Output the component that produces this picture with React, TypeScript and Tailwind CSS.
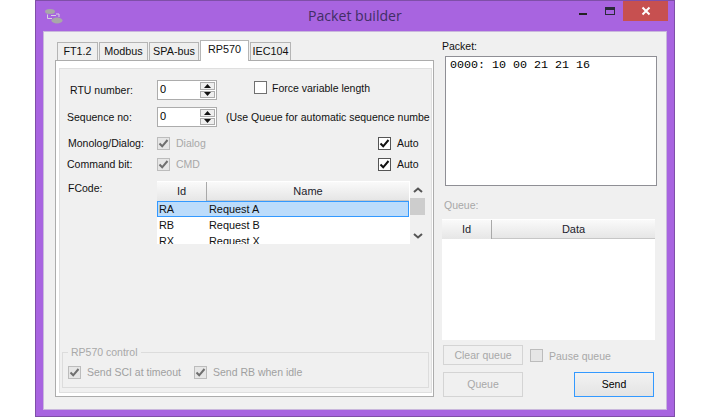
import React from "react";

const sans = "font-['Liberation_Sans',Arial,sans-serif]";

function Box({ on, dim }: { on?: boolean; dim?: boolean }) {
  return (
    <span
      className={
        "flex h-[13px] w-[13px] shrink-0 items-center justify-center border " +
        (dim ? "border-[#bcbcbc] bg-[#e6e6e6]" : on ? "border-[#555555] bg-white" : "border-[#707070] bg-white")
      }
    >
      {on && (
        <svg width="11" height="11" viewBox="0 0 11 11">
          <path
            d="M1.5 5.5 L4.2 8.3 L9.5 2"
            fill="none"
            stroke={dim ? "#6f6f6f" : "#111111"}
            strokeWidth="2"
          />
        </svg>
      )}
    </span>
  );
}

function Spinner() {
  return (
    <div className="flex h-[20px] w-[60px] shrink-0 border border-[#acacac] bg-white pl-[2px]">
      <span className="flex-1 text-[11px] leading-[16px] text-black">0</span>
      <div className="flex w-[16px] flex-col gap-px bg-white py-px pr-px">
        <div className="flex flex-1 items-center justify-center border border-[#adadad] bg-[#efefef]">
          <svg width="7" height="4" viewBox="0 0 7 4"><path d="M3.5 0 L7 4 L0 4Z" fill="#111" /></svg>
        </div>
        <div className="flex flex-1 items-center justify-center border border-[#adadad] bg-[#efefef]">
          <svg width="7" height="4" viewBox="0 0 7 4"><path d="M0 0 L7 0 L3.5 4Z" fill="#111" /></svg>
        </div>
      </div>
    </div>
  );
}

function Head({ id, name, nameW, idW }: { id: string; name: string; idW: string; nameW: string }) {
  return (
    <div className="flex h-[20px] shrink-0 border-t border-white text-[11px] leading-[18px] text-[#1c1c2c]">
      <div className={idW + " border-r border-[#a9a9a9] bg-gradient-to-b from-[#fafafa] to-[#e6e6e6] text-center"}>{id}</div>
      <div className={nameW + " border-b border-[#c6c6c6] bg-gradient-to-b from-[#fafafa] to-[#e6e6e6] text-center"}>{name}</div>
    </div>
  );
}

function Tab({ label, w }: { label: string; w: string }) {
  return (
    <div className={w + " h-[18px] shrink-0 border border-b-0 border-[#b5b5b5] bg-[#efefef] text-center text-[10.8px] leading-[17px] text-[#111]"}>
      {label}
    </div>
  );
}

export default function App() {
  return (
    <div className={sans + " h-[418px] w-[710px] overflow-hidden bg-white pl-[35px]"}>
      <div className="flex h-[417px] w-[640px] flex-col border border-[#7f4fa8] bg-[#a864e0]">
        {/* title bar */}
        <div className="flex h-[30px] shrink-0">
          <svg className="ml-[9px] mt-[7px] shrink-0" width="18" height="17" viewBox="0 0 18 17">
            <ellipse cx="5" cy="3.5" rx="5" ry="2.5" fill="#a8a8a8" />
            <ellipse cx="12" cy="12.5" rx="5.5" ry="3" fill="#a8a8a8" />
            <path d="M2.5 6.5 V10.5 H7 M11 6 H14 V9 M6 7.5 H11" fill="none" stroke="#d8d0e0" strokeWidth="1" />
          </svg>
          <div className="flex-1 pl-[245px] pt-[5px] font-['Open_Sans',sans-serif] text-[14.1px] leading-[20px] text-[#412e66]">
            Packet builder
          </div>
          <div className="mr-[16px] mt-[2px] flex h-[12px] w-[10px] items-end">
            <div className="h-[2px] w-[8px] bg-[#222]" />
          </div>
          <div className="mr-[8px] mt-[6px] h-[8px] w-[10px] border border-t-[3px] border-[#2a2a3a]" />
          <div className="mr-[6px] flex h-[20px] w-[45px] items-center justify-center bg-[#c75050]">
            <svg width="10" height="10" viewBox="0 0 10 10"><path d="M1.5 1.5 L8.5 8.5 M8.5 1.5 L1.5 8.5" stroke="#fff" strokeWidth="2" /></svg>
          </div>
        </div>

        {/* client */}
        <div className="mx-[7px] flex h-[379px] shrink-0 border border-[#c9b7dc] bg-[#f0f0f0] pl-[11px]">
          {/* left */}
          <div className="flex w-[379px] shrink-0 flex-col pt-[8px]">
            <div className="flex h-[20px] items-end gap-px pl-[2px]">
              <Tab label="FT1.2" w="w-[41px]" />
              <Tab label="Modbus" w="w-[49px]" />
              <Tab label="SPA-bus" w="w-[50px]" />
              <div className="relative top-px z-10 h-[21px] w-[49px] shrink-0 border border-b-0 border-[#b5b5b5] bg-white text-center text-[10.8px] leading-[17px] text-[#111]">RP570</div>
              <Tab label="IEC104" w="w-[41px]" />
            </div>
            <div className="h-[337px] border border-[#acacac] bg-white pb-[2px] pl-[3px] pr-px pt-[7px]">
              <div className="flex h-[325px] flex-col overflow-hidden border border-[#dfdfdf] bg-[#f0f0f0] text-[10.5px] leading-[14px] text-[#111]">
                <div className="mt-[11px] flex h-[20px] shrink-0 items-center">
                  <span className="w-[97px] shrink-0 pl-[10px]">RTU number:</span>
                  <Spinner />
                  <span className="ml-[37px] self-start pt-px"><Box /></span>
                  <span className="ml-[5px] self-start pt-px">Force variable length</span>
                </div>
                <div className="mt-[7px] flex h-[20px] shrink-0 items-center">
                  <span className="w-[97px] shrink-0 whitespace-nowrap pl-[7px]">Sequence no:</span>
                  <Spinner />
                  <span className="ml-[9px] shrink-0 whitespace-nowrap">(Use Queue for automatic sequence numbe</span>
                </div>
                <div className="mt-[10px] flex h-[13px] shrink-0 items-start leading-[12px]">
                  <span className="w-[97px] shrink-0 whitespace-nowrap pl-[8px]">Monolog/Dialog:</span>
                  <Box on dim />
                  <span className="ml-[6px] text-[#a8a8a8]">Dialog</span>
                  <span className="ml-auto"><Box on /></span>
                  <span className="ml-[6px] w-[34px]">Auto</span>
                </div>
                <div className="mt-[8px] flex h-[13px] shrink-0 items-start leading-[12px]">
                  <span className="w-[97px] shrink-0 pl-[7px]">Command bit:</span>
                  <Box on dim />
                  <span className="ml-[6px] text-[#a8a8a8]">CMD</span>
                  <span className="ml-auto"><Box on /></span>
                  <span className="ml-[6px] w-[34px]">Auto</span>
                </div>
                <div className="mt-[10px] flex h-[63px] shrink-0">
                  <span className="w-[97px] shrink-0 pl-[8px]">FCode:</span>
                  <div className="flex w-[253px] shrink-0 flex-col overflow-hidden bg-white text-[10.9px]">
                    <Head id="Id" name="Name" idW="w-[50px]" nameW="w-[202px]" />
                    <div className="flex h-[16px] w-[252px] shrink-0 border border-[#3399ff] bg-[#bcdcfb] leading-[15px]">
                      <span className="w-[51px] pl-px">RA</span><span>Request A</span>
                    </div>
                    <div className="flex h-[16px] shrink-0 pl-[2px] leading-[16px]"><span className="w-[50px]">RB</span><span>Request B</span></div>
                    <div className="flex h-[16px] shrink-0 pl-[2px] leading-[16px]"><span className="w-[50px]">RX</span><span>Request X</span></div>
                  </div>
                  <div className="flex w-[15px] shrink-0 flex-col items-center">
                    <svg className="mt-[6px]" width="10" height="6" viewBox="0 0 10 6"><path d="M1 5 L5 1.5 L9 5" fill="none" stroke="#555" strokeWidth="2" /></svg>
                    <div className="mt-[5px] h-[17px] w-[15px] bg-[#cdcdcd]" />
                    <svg className="mt-[18px]" width="10" height="6" viewBox="0 0 10 6"><path d="M1 1 L5 4.5 L9 1" fill="none" stroke="#555" strokeWidth="2" /></svg>
                  </div>
                </div>
                <fieldset className="ml-[2px] mt-[102px] h-[42px] w-[367px] shrink-0 border border-[#dcdcdc]">
                  <legend className="ml-[5px] px-[3px] leading-[13px] text-[#a8a8a8]">RP570 control</legend>
                  <div className="ml-[5px] mt-[6px] flex items-center text-[#a0a0a0]">
                    <Box on dim />
                    <span className="ml-[6px]">Send SCI at timeout</span>
                    <span className="ml-[13px]"><Box on dim /></span>
                    <span className="ml-[6px]">Send RB when idle</span>
                  </div>
                </fieldset>
              </div>
            </div>
          </div>

          {/* right */}
          <div className="ml-[8px] flex w-[215px] shrink-0 flex-col pt-[7px] text-[10.5px] leading-[14px]">
            <span className="h-[14px] text-[#111]">Packet:</span>
            <div className="ml-[3px] mt-[3px] h-[130px] w-[212px] shrink-0 border border-[#8f8f95] bg-white pl-[4px] pt-px font-['Liberation_Mono',monospace] text-[11.67px] leading-[14px] text-black">
              0000: 10 00 21 21 16
            </div>
            <span className="ml-[2px] mt-[12px] h-[14px] text-[#a8a8a8]">Queue:</span>
            <div className="mt-[7px] flex h-[121px] w-[213px] shrink-0 flex-col bg-white text-[10.9px]">
              <Head id="Id" name="Data" idW="w-[50px]" nameW="w-[163px]" />
            </div>
            <div className="mt-[5px] flex h-[20px] shrink-0 items-center pl-px">
              <div className="h-[20px] w-[80px] border border-[#d4d4d4] text-center leading-[18px] text-[#a8a8a8]">Clear queue</div>
              <span className="ml-[7px]"><Box dim /></span>
              <span className="ml-[6px] mt-px text-[#a8a8a8]">Pause queue</span>
            </div>
            <div className="mt-[7px] flex h-[25px] shrink-0 justify-between pl-px pr-[3px]">
              <div className="w-[80px] border border-[#d4d4d4] text-center leading-[22px] text-[#a8a8a8]">Queue</div>
              <div className="w-[80px] border border-[#3399ff] bg-gradient-to-b from-[#f2f2f2] to-[#e4e4e4] text-center leading-[22px] text-black">Send</div>
            </div>
          </div>
        </div>
      </div>
    </div>
  );
}
